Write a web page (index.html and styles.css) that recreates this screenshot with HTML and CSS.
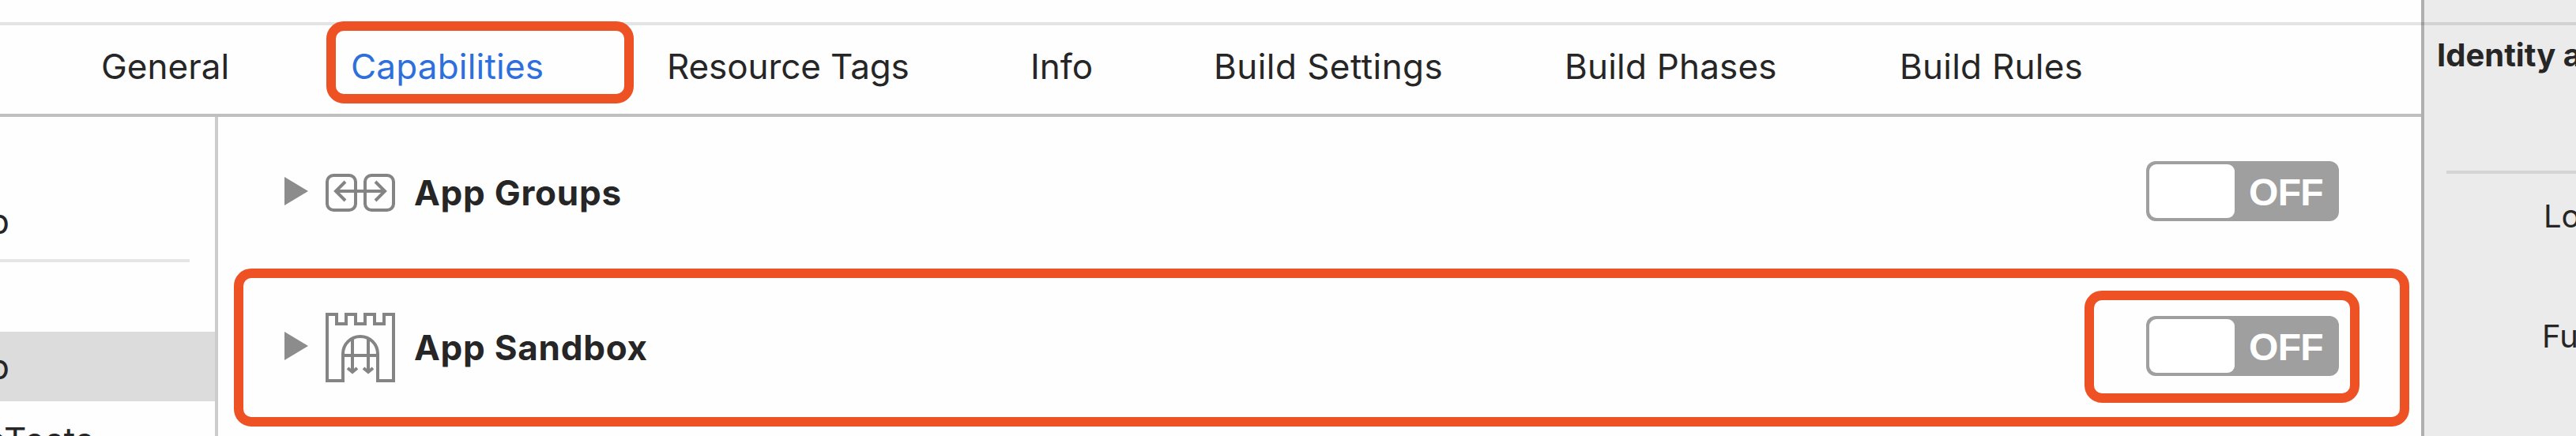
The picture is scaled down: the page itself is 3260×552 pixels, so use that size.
FILE: index.html
```html
<!DOCTYPE html>
<html lang="en">
<head>
<meta charset="utf-8">
<title>Capabilities</title>
<link rel="stylesheet" href="styles.css">
</head>
<body>
<div class="window">
  <main class="editor">
    <nav class="tabs">
      <span class="tab general">General</span>
      <span class="tab active">Capabilities</span>
      <span class="tab tags">Resource Tags</span>
      <span class="tab info">Info</span>
      <span class="tab settings">Build Settings</span>
      <span class="tab phases">Build Phases</span>
      <span class="tab rules">Build Rules</span>
    </nav>
    <div class="content">
      <aside class="targets">
        <div class="project"><span class="name">p</span></div>
        <div class="divider"></div>
        <div class="target selected"><span class="name">p</span></div>
        <div class="target tests"><span class="name">pTests</span></div>
      </aside>
      <section class="capabilities">
        <div class="capability">
          <svg class="disclosure" viewBox="0 0 30 36"><path d="M0 0L30 18L0 36Z"/></svg>
          <svg class="icon groups" viewBox="0 0 88 48">
            <rect x="2" y="2" width="36" height="44" rx="8"/>
            <rect x="50" y="2" width="36" height="44" rx="8"/>
            <path d="M13 22H75M25 10L13 22L25 34M63 10L75 22L63 34"/>
          </svg>
          <span class="label">App Groups</span>
          <div class="switch"><i class="knob"></i><span class="state">OFF</span></div>
        </div>
        <div class="capability sandbox">
          <svg class="disclosure" viewBox="0 0 30 36"><path d="M0 0L30 18L0 36Z"/></svg>
          <svg class="icon" viewBox="0 0 88 88">
            <path d="M2 2H14V14H26V2H38V14H50V2H62V14H74V2H86V86H66V52A22 22 0 0 0 22 52V86H2Z"/>
            <path d="M22 54H66M34 33V74M54 33V74M28 70L34 75L40 70M48 70L54 75L60 70"/>
          </svg>
          <span class="label">App Sandbox</span>
          <div class="switch"><i class="knob"></i><span class="state">OFF</span></div>
        </div>
      </section>
    </div>
  </main>
  <aside class="inspector">
    <h2 class="title">Identity and Type</h2>
    <div class="rule"></div>
    <div class="field location">Location</div>
    <div class="field path">Full Path</div>
  </aside>
  <div class="toolbar-line"></div>
  <div class="mark mark-tab"></div>
  <div class="mark mark-row"></div>
  <div class="mark mark-switch"></div>
</div>
</body>
</html>
```
FILE: styles.css
```css
* { box-sizing: border-box; }
body {
  margin: 0;
  background: #fff;
  color: #262626;
  font-family: Inter, "Liberation Sans", sans-serif;
}
.window {
  position: relative;
  display: flex;
  width: 3260px;
  height: 552px;
  overflow: hidden;
}
.editor {
  display: flex;
  flex-direction: column;
  width: 3064px;
  flex: none;
  background: #fefefe;
}
.tabs {
  display: grid;
  grid-template-columns: 316px 400px 460px 232px 444px 424px 1fr;
  height: 148px;
  flex: none;
  padding: 57px 0 0 128px;
  border-bottom: 4px solid #bfbfbf;
  font-size: 44px;
  line-height: 54px;
  white-space: nowrap;
}
.active { color: #2e6fdc; letter-spacing: .2px; }
.tags { letter-spacing: -.1px; }
.settings { letter-spacing: .45px; }
.phases { letter-spacing: .2px; }
.rules { letter-spacing: .25px; }
.content { display: flex; flex: 1; min-height: 0; }
.targets {
  width: 276px;
  flex: none;
  border-right: 4px solid #ccc;
  font-size: 44px;
  line-height: 54px;
  overflow: hidden;
}
.project, .target { display: flex; }
.project { height: 180px; padding-top: 105px; }
.name { flex: none; margin-left: -15px; }
.divider { width: 240px; height: 4px; margin-bottom: 88px; background: #e6e6e6; }
.target { height: 88px; padding-top: 17px; }
.selected { background: #dcdcdc; }
.tests { padding-top: 22px; letter-spacing: .6px; }
.tests .name { margin-left: -19px; }
.capabilities { flex: 1; }
.capability {
  display: flex;
  align-items: center;
  height: 196px;
  padding: 0 104px 4px 84px;
}
.disclosure { width: 30px; height: 36px; margin-right: 22px; margin-top: -4px; fill: #8c8c8c; }
.icon {
  width: 88px;
  height: 88px;
  margin-right: 24px;
  fill: none;
  stroke: #848484;
  stroke-width: 4;
}
.groups { height: 48px; }
.label { font-size: 44px; line-height: 54px; font-weight: 700; letter-spacing: .75px; }
.switch {
  display: flex;
  align-items: center;
  width: 244px;
  height: 76px;
  margin-left: auto;
  margin-top: -4px;
  padding: 4px;
  border-radius: 12px;
  background: #9f9f9f;
}
.knob { width: 108px; height: 68px; border-radius: 9px; background: #fff; }
.state {
  margin-left: 18px;
  padding-top: 3px;
  color: #fff;
  font: 700 48px/54px "Liberation Sans", Arial, sans-serif;
  letter-spacing: -.7px;
}
.inspector {
  width: 196px;
  flex: none;
  border-left: 4px solid #b0b0b0;
  background: #ebebeb;
  overflow: hidden;
  white-space: nowrap;
}
.title { margin: 45px 0 0 16px; font-size: 40px; line-height: 50px; font-weight: 700; }
.rule { height: 4px; margin: 121px 0 0 28px; background: #d4d4d4; }
.field { font-size: 40px; line-height: 50px; }
.location { margin: 29px 0 0 151px; }
.path { margin: 102px 0 0 149px; }
.toolbar-line {
  position: absolute;
  top: 28px;
  left: 0;
  right: 0;
  height: 4px;
  background: rgba(0, 0, 0, .1);
}
.mark { position: absolute; border: 12px solid #ee5124; border-radius: 22px; }
.mark-tab { left: 413px; top: 27px; width: 389px; height: 104px; }
.mark-row { left: 296px; top: 340px; width: 2753px; height: 200px; }
.mark-switch { left: 2638px; top: 368px; width: 348px; height: 142px; }
```
